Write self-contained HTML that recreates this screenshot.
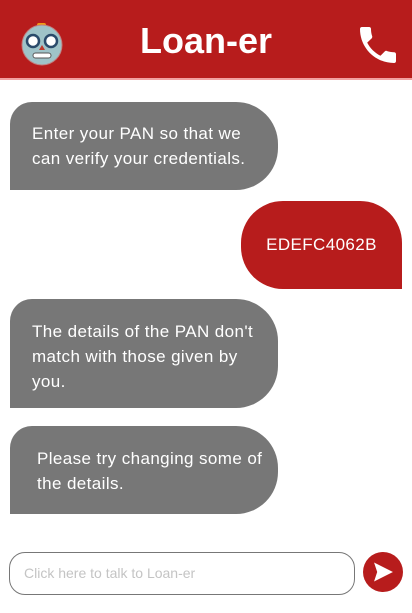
<!DOCTYPE html><html><head><style>
body{margin:0;width:412px;height:613px;background:#fff;font-family:"Liberation Sans",sans-serif;position:relative;overflow:hidden}
.hd{position:absolute;left:0;top:0;width:412px;height:78px;background:#b71c1c;border-bottom:2px solid #f2a0a0}
.t{position:absolute;left:0;right:0;top:20px;text-align:center;color:#fff;font-weight:bold;font-size:36px;letter-spacing:0px}
.b{position:absolute;color:#fff;font-size:17px;line-height:25px;box-sizing:border-box;letter-spacing:0.4px}
.g{background:#777;left:10px;width:268px;border-radius:22px 42px 42px 0;padding:0 0 0 22px}
.r{background:#b71c1c;left:241px;width:161px;top:201px;height:88px;border-radius:42px 42px 0 42px;text-align:center;padding-top:31px}
</style></head><body>
<div class="hd">
<svg style="position:absolute;left:20px;top:22px" width="44" height="44" viewBox="0 0 44 44"><rect x="17" y="1" width="9" height="5" rx="2" fill="#f39c12"/><circle cx="22" cy="23" r="20" fill="#9fc3c8"/><circle cx="22" cy="23" r="20" fill="none" stroke="#c08080" stroke-width="1"/><circle cx="13" cy="19" r="6" fill="#fff" stroke="#2a4a6a" stroke-width="2.5"/><circle cx="31" cy="19" r="6" fill="#fff" stroke="#2a4a6a" stroke-width="2.5"/><path d="M22 23l-3 5h6z" fill="#c0392b"/><rect x="13" y="31" width="18" height="5" rx="2.5" fill="#fff" stroke="#555"/></svg>
<div class="t">Loan-er</div>
<svg style="position:absolute;left:359px;top:27px" width="38" height="36" viewBox="3 3 18 18"><path fill="#fff" d="M6.6 10.8c1.4 2.8 3.8 5.1 6.6 6.6l2.2-2.2c.3-.3.7-.4 1-.2 1.1.4 2.3.6 3.6.6.6 0 1 .4 1 1V20c0 .6-.4 1-1 1C10.6 21 3 13.4 3 4c0-.6.4-1 1-1h3.5c.6 0 1 .4 1 1 0 1.3.2 2.5.6 3.6.1.3 0 .7-.2 1L6.6 10.8z"/></svg>
</div>
<div class="b g" style="top:102px;height:88px;padding-top:19px">Enter your PAN so that we<br>can verify your credentials.</div>
<div class="b r">EDEFC4062B</div>
<div class="b g" style="top:299px;height:109px;padding-top:20px">The details of the PAN don't<br>match with those given by<br>you.</div>
<div class="b g" style="top:426px;height:88px;padding-top:20px;padding-left:27px">Please try changing some of<br>the details.</div>
<div style="position:absolute;left:9px;top:552px;width:346px;height:43px;box-sizing:border-box;border:1px solid #777;border-radius:16px;color:#c4c4c4;font-size:14px;line-height:41px;padding-left:14px">Click here to talk to Loan-er</div>
<div style="position:absolute;left:363px;top:552px;width:40px;height:40px;border-radius:50%;background:#b71c1c"></div>
<svg style="position:absolute;left:373px;top:561px" width="21" height="22" viewBox="0 0 20 20"><path d="M1 1L19 10L1 19L4 10z" fill="#fff"/></svg>
</body></html>
